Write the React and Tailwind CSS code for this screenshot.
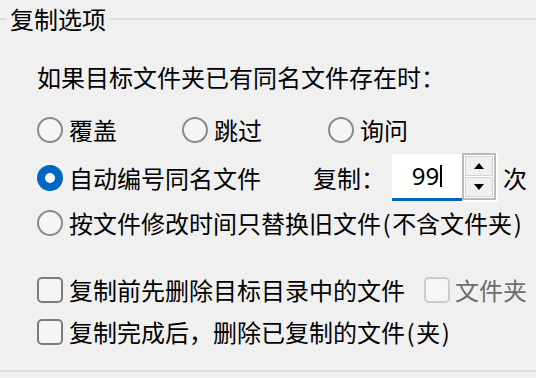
import React from "react";

const FONT = { fontFamily: '"Microsoft YaHei UI", "Noto Sans CJK SC", "Noto Sans", sans-serif' };

function Radio({ checked }) {
  if (checked) {
    return (
      <span className="w-[26px] h-[26px] rounded-full bg-[#0067c0] flex items-center justify-center shrink-0">
        <span className="w-[10px] h-[10px] rounded-full bg-white" />
      </span>
    );
  }
  return <span className="w-[26px] h-[26px] rounded-full border-2 border-[#8a8a8a] bg-[#f5f5f5] shrink-0" />;
}

function Check({ disabled }) {
  return (
    <span
      className={
        disabled
          ? "w-[26px] h-[26px] rounded-[5px] border-2 border-[#cbcbcb] bg-[#f6f6f6] shrink-0"
          : "w-[26px] h-[26px] rounded-[5px] border-2 border-[#7c7c7c] bg-[#f5f5f5] shrink-0"
      }
    />
  );
}

function P({ children }) {
  return <span className="px-[1.5px]">{children}</span>;
}

export default function App() {
  return (
    <div
      className="w-[536px] h-[378px] bg-[#f0f0f0] text-black text-[24px] leading-none overflow-hidden flex flex-col"
      style={FONT}
    >
      {/* group title */}
      <div className="h-[38px] flex items-center shrink-0">
        <div className="w-[6px] h-[2px] bg-[#dcdcdc]" />
        <span className="ml-[4px] whitespace-nowrap">复制选项</span>
        <div className="flex-1 h-[2px] bg-[#dcdcdc] ml-[4px]" />
      </div>

      <div className="pl-[37px] flex flex-col">
        <div className="mt-[24px] h-[30px] flex items-center whitespace-nowrap">
          如果目标文件夹已有同名文件存在时：
        </div>

        <div className="mt-[23px] h-[30px] flex items-center whitespace-nowrap">
          <div className="w-[145px] flex items-center gap-[6px]">
            <Radio />
            <span>覆盖</span>
          </div>
          <div className="w-[146px] flex items-center gap-[6px]">
            <Radio />
            <span>跳过</span>
          </div>
          <div className="flex items-center gap-[6px]">
            <Radio />
            <span>询问</span>
          </div>
        </div>

        <div className="mt-[9px] h-[48px] flex items-center whitespace-nowrap">
          <div className="w-[276px] flex items-center gap-[6px]">
            <Radio checked />
            <span>自动编号同名文件</span>
          </div>
          <div className="w-[79px]">复制：</div>
          <div className="w-[70px] h-[47px] bg-white border-b-[3px] border-[#0067c0] flex items-center justify-center self-end mb-[1px]">
            <span className="text-[24px]" style={{ fontFamily: '"Noto Sans", "DejaVu Sans", sans-serif' }}>
              99
            </span>
            <span className="w-[2px] h-[22px] bg-black ml-[1px]" />
          </div>
          <div className="bg-white pr-[2px] pb-[2px] self-start -mt-[1px]">
            <div className="w-[34px] h-[47px] border-2 border-[#bababa] flex flex-col p-[1px] gap-[1px]">
              <div className="flex-1 border border-[#d4d4d4] bg-[#f0f0f0] flex items-center justify-center">
                <svg width="10" height="6" viewBox="0 0 10 6">
                  <polygon points="5,0 10,6 0,6" fill="#000" />
                </svg>
              </div>
              <div className="flex-1 border border-[#d4d4d4] bg-[#f0f0f0] flex items-center justify-center">
                <svg width="10" height="6" viewBox="0 0 10 6">
                  <polygon points="0,0 10,0 5,6" fill="#000" />
                </svg>
              </div>
            </div>
          </div>
          <span className="ml-[5px]">次</span>
        </div>

        <div className="mt-[6px] h-[30px] flex items-center gap-[6px] whitespace-nowrap">
          <Radio />
          <span>
            按文件修改时间只替换旧文件<P>(</P>不含文件夹<P>)</P>
          </span>
        </div>

        <div className="mt-[37px] h-[30px] flex items-center whitespace-nowrap">
          <div className="w-[387px] flex items-center gap-[6px]">
            <Check />
            <span>复制前先删除目标目录中的文件</span>
          </div>
          <div className="flex items-center gap-[5px] text-[#6d6d6d]">
            <Check disabled />
            <span>文件夹</span>
          </div>
        </div>

        <div className="mt-[12px] h-[30px] flex items-center gap-[6px] whitespace-nowrap">
          <Check />
          <span>
            复制完成后，删除已复制的文件<P>(</P>夹<P>)</P>
          </span>
        </div>
      </div>

      <div className="mt-[23px] h-[2px] bg-[#dcdcdc] shrink-0" />
    </div>
  );
}
